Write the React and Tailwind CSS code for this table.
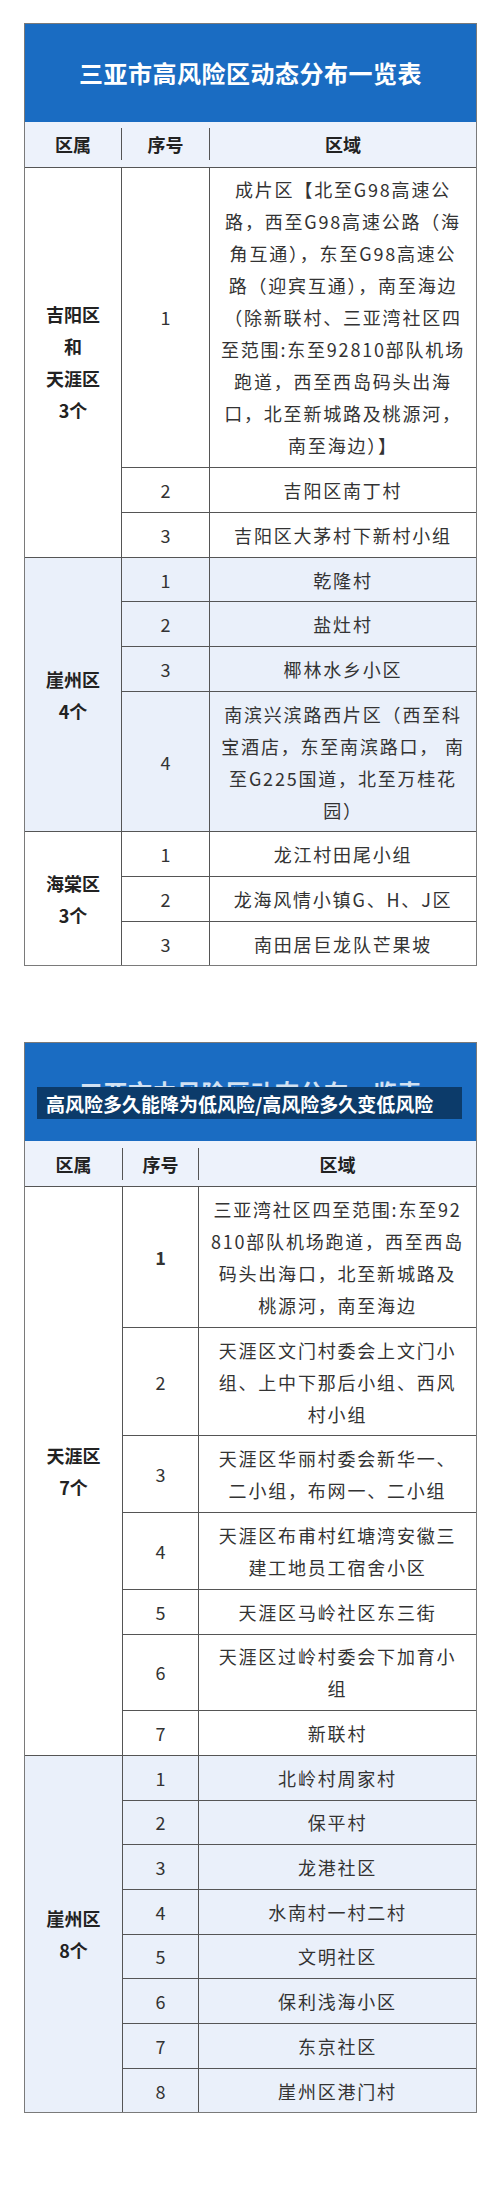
import React from 'react';

const font = { fontFamily: '"Noto Sans CJK SC", "Noto Sans", sans-serif' };

const table1 = [
  {
    area: ['吉阳区', '和', '天涯区', '3个'],
    tint: false,
    rows: [
      {
        n: '1',
        lines: [
          '成片区【北至G98高速公',
          '路，西至G98高速公路（海',
          '角互通），东至G98高速公',
          '路（迎宾互通），南至海边',
          '（除新联村、三亚湾社区四',
          '至范围:东至92810部队机场',
          '跑道，西至西岛码头出海',
          '口，北至新城路及桃源河，',
          '南至海边）】'
        ]
      },
      { n: '2', lines: ['吉阳区南丁村'] },
      { n: '3', lines: ['吉阳区大茅村下新村小组'] }
    ]
  },
  {
    area: ['崖州区', '4个'],
    tint: true,
    rows: [
      { n: '1', lines: ['乾隆村'] },
      { n: '2', lines: ['盐灶村'] },
      { n: '3', lines: ['椰林水乡小区'] },
      { n: '4', lines: ['南滨兴滨路西片区（西至科', '宝酒店，东至南滨路口， 南', '至G225国道，北至万桂花', '园）'] }
    ]
  },
  {
    area: ['海棠区', '3个'],
    tint: false,
    rows: [
      { n: '1', lines: ['龙江村田尾小组'] },
      { n: '2', lines: ['龙海风情小镇G、H、J区'] },
      { n: '3', lines: ['南田居巨龙队芒果坡'] }
    ]
  }
];

const table2 = [
  {
    area: ['天涯区', '7个'],
    tint: false,
    rows: [
      { n: '1', bold: true, lines: ['三亚湾社区四至范围:东至92', '810部队机场跑道，西至西岛', '码头出海口，北至新城路及', '桃源河，南至海边'] },
      { n: '2', lines: ['天涯区文门村委会上文门小', '组、上中下那后小组、西风', '村小组'] },
      { n: '3', lines: ['天涯区华丽村委会新华一、', '二小组，布网一、二小组'] },
      { n: '4', lines: ['天涯区布甫村红塘湾安徽三', '建工地员工宿舍小区'] },
      { n: '5', lines: ['天涯区马岭社区东三街'] },
      { n: '6', lines: ['天涯区过岭村委会下加育小', '组'] },
      { n: '7', lines: ['新联村'] }
    ]
  },
  {
    area: ['崖州区', '8个'],
    tint: true,
    rows: [
      { n: '1', lines: ['北岭村周家村'] },
      { n: '2', lines: ['保平村'] },
      { n: '3', lines: ['龙港社区'] },
      { n: '4', lines: ['水南村一村二村'] },
      { n: '5', lines: ['文明社区'] },
      { n: '6', lines: ['保利浅海小区'] },
      { n: '7', lines: ['东京社区'] },
      { n: '8', lines: ['崖州区港门村'] }
    ]
  }
];

// wide: column widths for the 1st and 2nd column (border included)
function RiskTable({ title, wide, groups }) {
  const c1 = wide ? 'w-[98px]' : 'w-[97px]';
  const c2 = wide ? 'w-[76px]' : 'w-[88px]';

  return (
    <div className="w-[453px] border border-[#7a7a7a] text-[18px] leading-[32px] text-[#333]">
      <div className="flex h-[98px] items-center justify-center bg-[#1a6cc2] text-[24px] font-bold tracking-[0.5px] text-white">
        {title}
      </div>
      <div className="flex border-b border-[#555] bg-[#edf2fb] py-[6.3px] font-bold text-[#222]">
        <div className={`${c1} shrink-0 border-r border-[#555] text-center`}>区属</div>
        <div className={`${c2} shrink-0 border-r border-[#555] text-center`}>序号</div>
        <div className="flex-1 text-center">区域</div>
      </div>
      {groups.map((g, gi) => (
        <div
          key={gi}
          className={`flex ${g.tint ? 'bg-[#eaf0fa]' : 'bg-white'} ${gi < groups.length - 1 ? 'border-b border-[#555]' : ''}`}
        >
          <div className={`${c1} flex shrink-0 flex-col items-center justify-center border-r border-[#555] font-bold text-[#222]`}>
            {g.area.map((a) => (
              <div key={a}>{a}</div>
            ))}
          </div>
          <div className="flex flex-1 flex-col">
            {g.rows.map((r, ri) => (
              <div key={ri} className={`flex ${ri < g.rows.length - 1 ? 'border-b border-[#555]' : ''}`}>
                <div className={`${c2} flex shrink-0 items-center justify-center border-r border-[#555] ${r.bold ? 'font-bold' : ''}`}>
                  {r.n}
                </div>
                <div className="min-w-0 flex-1 py-[5.85px] text-center tracking-[1.8px]">
                  {r.lines.map((l, li) => (
                    <div key={li} className="whitespace-nowrap">
                      {l}
                    </div>
                  ))}
                </div>
              </div>
            ))}
          </div>
        </div>
      ))}
    </div>
  );
}

export default function App() {
  return (
    <div className="h-[2207px] overflow-hidden bg-white pl-[24px] pt-[23px]" style={font}>
      <RiskTable title="三亚市高风险区动态分布一览表" groups={table1} />
      <div className="relative mt-[76px] w-[453px]">
        <RiskTable title={<span className="opacity-80">三亚市中风险区动态分布一览表</span>} wide groups={table2} />
        <div className="absolute left-[13px] top-[45px] flex h-[32px] w-[425px] items-center bg-[#0c3b6a] pl-[9px] text-[19px] font-bold leading-none text-white">
          高风险多久能降为低风险/高风险多久变低风险
        </div>
      </div>
    </div>
  );
}
